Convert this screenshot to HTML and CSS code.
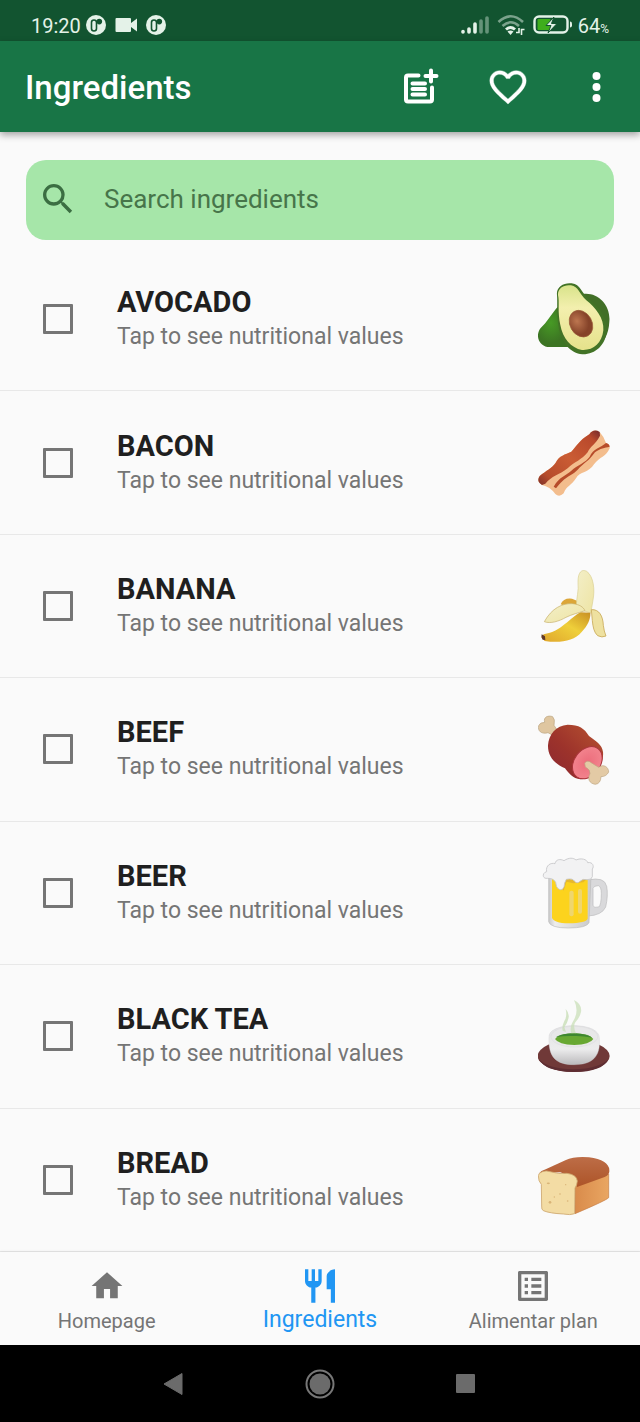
FILE: index.html
```html
<!DOCTYPE html>
<html lang="en">
<head>
<meta charset="utf-8">
<meta name="viewport" content="width=device-width, initial-scale=1">
<title>Ingredients</title>
<link rel="stylesheet" href="styles.css">
</head>
<body>
<div class="status">
  <div class="status-group">
    <span class="status-time">19:20</span>
    <svg class="status-dot" viewBox="0 0 20 20"><circle cx="10" cy="10" r="10" fill="#e4f2e8"/><rect x="5.500" y="5" width="5" height="11" rx="2.500" fill="none" stroke="#125430" stroke-width="1.600"/><circle cx="13.300" cy="6.600" r="2.800" fill="#125430"/></svg>
    <svg class="status-cam" viewBox="0 0 22 16"><path d="M1.500 1h13.500q1 0 1 1v4l6-4.500v13L16 10v4q0 1-1 1H1.500q-1 0-1-1V2q0-1 1-1z" fill="#e4f2e8"/></svg>
    <svg class="status-dot" viewBox="0 0 20 20"><circle cx="10" cy="10" r="10" fill="#e4f2e8"/><rect x="5.500" y="5" width="5" height="11" rx="2.500" fill="none" stroke="#125430" stroke-width="1.600"/><circle cx="13.300" cy="6.600" r="2.800" fill="#125430"/></svg>
  </div>
  <div class="status-group status-right">
    <svg class="status-signal" viewBox="0 0 28 18" fill="none" stroke="#e4f2e8" stroke-width="3.600" stroke-linecap="round"><path d="M2 16v-.5M8 16v-3M14 16V8"/><path d="M20 16V5M26 16V2" opacity=".4"/></svg>
    <svg class="status-wifi" viewBox="0 0 28 22" fill="none" stroke="#e4f2e8" stroke-width="2.600"><path d="M1.500 8Q13.500-3.500 26 8M5.500 12Q13.500 4.500 22 12" opacity=".5"/><path d="M9 15.500q4.500-4 9 0" stroke-width="3"/><path d="M10.500 17.500q3-2 6 0L13.500 21z" fill="#e4f2e8" stroke="none"/><path d="M19 18.500h3v-4.500M24.500 21v-5.500h3" stroke-width="1.600"/></svg>
    <svg class="status-battery" viewBox="0 0 40 20"><rect x="1.500" y="1.500" width="33" height="16" rx="4.500" fill="none" stroke="#e4f2e8" stroke-width="2.400"/><rect x="4.500" y="4" width="13" height="11" rx="1" fill="#3fae1c"/><path d="M37 6.500q2 0 2 2v2q0 2-2 2z" fill="#e4f2e8"/><path d="M21 2L13 10.500h5L15 18l9-9.500h-5.500z" fill="#e4f2e8" stroke="#125430" stroke-width="1"/></svg>
    <span class="status-level">64<span class="status-percent">%</span></span>
  </div>
</div>

<header class="appbar">
  <h1 class="appbar-title">Ingredients</h1>
  <button class="icon-button" aria-label="Add ingredient"><svg class="icon" viewBox="0 0 40 40" fill="none" stroke="#fff" stroke-width="4" stroke-linecap="round" stroke-linejoin="round"><path d="M18.500 8.500H8q-2 0-2 2v22q0 2 2 2h22q2 0 2-2V20.500M12.500 16.500h12.500M12.500 22h12.500M12.500 27.500h12.500M31 3.500v11M25.500 9h11" /></svg></button>
  <button class="icon-button" aria-label="Favorites"><svg class="icon" viewBox="1 1 22 22" fill="#fff"><path d="M16.500 3c-1.740 0-3.410.81-4.500 2.090C10.910 3.810 9.240 3 7.500 3 4.420 3 2 5.420 2 8.500c0 3.780 3.400 6.860 8.550 11.540L12 21.350l1.450-1.320C18.600 15.360 22 12.280 22 8.500 22 5.420 19.580 3 16.500 3zm-4.400 15.550l-.1.100-.1-.1C7.140 14.240 4 11.390 4 8.500 4 6.500 5.500 5 7.500 5c1.540 0 3.040.99 3.570 2.360h1.870C13.460 5.990 14.960 5 16.500 5c2 0 3.500 1.500 3.500 3.500 0 2.890-3.140 5.740-7.900 10.050z" stroke="#fff" stroke-width=".2"/></svg></button>
  <button class="icon-button" aria-label="More options"><svg class="icon" viewBox="0 0 40 40" fill="#fff"><circle cx="20.500" cy="9" r="4"/><circle cx="20.500" cy="20" r="4"/><circle cx="20.500" cy="31" r="4"/></svg></button>
</header>

<main class="content">
  <label class="search">
    <svg class="icon" viewBox="0 0 24 24" fill="#3b6e42"><path d="M15.500 14h-.79l-.28-.27A6.471 6.471 0 0 0 16 9.500 6.500 6.500 0 1 0 9.500 16c1.610 0 3.090-.59 4.230-1.570l.27.28v.79l5 4.990L20.490 19l-4.990-5zm-6 0C7.010 14 5 11.990 5 9.500S7.010 5 9.500 5 14 7.010 14 9.500 11.990 14 9.500 14z"/></svg>
    <input class="search-input" type="search" placeholder="Search ingredients" aria-label="Search ingredients">
  </label>

  <ul class="list">
    <li class="row">
      <input class="check" type="checkbox" id="avocado">
      <label class="row-text" for="avocado"><span class="row-name">AVOCADO</span><span class="row-hint">Tap to see nutritional values</span></label>
      <svg class="food" viewBox="54 39 216 216">
        <defs>
          <radialGradient id="av-skin" cx=".4" cy=".4"><stop offset="0" stop-color="#479a25"/><stop offset="1" stop-color="#3c7423"/></radialGradient>
          <linearGradient id="av-flesh" x1="0" y1="0" x2="0" y2="1"><stop offset="0" stop-color="#d8e38a"/><stop offset=".35" stop-color="#f3efae"/><stop offset="1" stop-color="#e5e28b"/></linearGradient>
          <radialGradient id="av-pit" cx=".4" cy=".35"><stop offset="0" stop-color="#bd7650"/><stop offset="1" stop-color="#854329"/></radialGradient>
        </defs>
        <path d="M112 112C95 132 80 158 62 174C45 196 56 225 82 231L150 231L150 110z" fill="url(#av-skin)"/>
        <path d="M188 72C233 65 273 105 268 155C266 195 250 218 232 232z" fill="#416f27"/>
        <path d="M111 75C108 50 132 37 155 40C183 44 182 66 205 86C235 108 265 142 260 184C256 226 226 254 187 253C151 250 123 216 116 171C109 128 113 98 111 75z" fill="#427326"/>
        <path d="M114 75C113 54 132 43 153 46C176 50 177 71 199 91C226 112 253 145 250 181C246 220 219 242 186 240C153 234 128 205 121 165C112 125 119 95 114 75z" fill="url(#av-flesh)"/>
        <ellipse cx="183" cy="161" rx="33" ry="42" transform="rotate(-30 183 161)" fill="url(#av-pit)" stroke="#9a5b38" stroke-width="2"/>
      </svg>
    </li>
    <li class="row">
      <input class="check" type="checkbox" id="bacon">
      <label class="row-text" for="bacon"><span class="row-name">BACON</span><span class="row-hint">Tap to see nutritional values</span></label>
      <svg class="food" viewBox="54 34 216 216">
        <defs><linearGradient id="ba-meat" x1="0" y1="1" x2="1" y2="0"><stop offset="0" stop-color="#7e3029"/><stop offset=".16" stop-color="#b64c2b"/><stop offset=".5" stop-color="#ca5c34"/><stop offset=".86" stop-color="#b9492c"/><stop offset="1" stop-color="#72292c"/></linearGradient></defs>
        <path d="M208 56Q220 38 239 49Q252 63 258 82Q271 88 269 98C257 125 240 122 222 146C207 172 179 167 168 188C153 211 141 209 131 233Q118 246 106 235Q90 213 66 208Q48 197 59 181C79 164 95 158 107 141C118 119 135 117 154 108C169 94 175 76 208 56z" fill="#f3bd8d"/>
        <path d="M208 56Q220 38 239 49L240 60C225 88 211 91 203 110C186 132 163 139 143 158C117 178 95 181 76 204L66 208Q48 197 59 181C79 164 95 158 107 141C118 119 135 117 154 108C169 94 175 76 208 56z" fill="url(#ba-meat)"/>
        <path d="M258 82Q268 84 269 93C254 97 241 97 225 110C208 135 192 142 173 162C156 181 137 179 108 218L101 213C118 182 137 181 154 165C172 148 197 141 209 123C219 98 243 96 258 82z" fill="#b74c2a"/>
      </svg>
    </li>
    <li class="row">
      <input class="check" type="checkbox" id="banana">
      <label class="row-text" for="banana"><span class="row-name">BANANA</span><span class="row-hint">Tap to see nutritional values</span></label>
      <svg class="food" viewBox="54 36 216 216">
        <defs>
          <linearGradient id="bn-peel" x1="1" y1="0" x2="0" y2="1"><stop offset="0" stop-color="#c88f22"/><stop offset=".45" stop-color="#efcf3a"/><stop offset="1" stop-color="#dfa52c"/></linearGradient>
          <linearGradient id="bn-inner" x1="0" y1="0" x2="1" y2="1"><stop offset="0" stop-color="#f3efc8"/><stop offset="1" stop-color="#eee4a4"/></linearGradient>
        </defs>
        <path d="M122 139Q130 119 156 122L180 132L194 155L145 148z" fill="#dca638"/>
        <path d="M174 71C174 43 185 32 200 40C221 55 225 96 219 126Q215 151 212 165Q192 162 169 145C169 119 177 100 174 71z" fill="url(#bn-inner)" stroke="#d9cf91" stroke-width="2"/>
        <path d="M182 163C150 178 125 221 71 229L64 238L74 249C121 256 162 249 185 222C205 201 212 182 211 164z" fill="url(#bn-peel)"/>
        <path d="M65 229L75 235L76 246L68 245Q62 237 65 229z" fill="#5f3928"/>
        <path d="M73 191C95 151 127 135 158 137C178 139 190 147 195 158C174 165 156 169 138 178C117 190 91 198 73 191z" fill="url(#bn-inner)" stroke="#c6ae66" stroke-width="2"/>
        <path d="M214 155C237 153 249 174 250 202Q252 220 258 234Q246 240 233 233C222 223 219 208 217 188z" fill="#eee1a0" stroke="#c9aa58" stroke-width="2.500"/>
      </svg>
    </li>
    <li class="row">
      <input class="check" type="checkbox" id="beef">
      <label class="row-text" for="beef"><span class="row-name">BEEF</span><span class="row-hint">Tap to see nutritional values</span></label>
      <svg class="food" viewBox="54 40 216 216">
        <defs>
          <linearGradient id="be-meat" x1="1" y1="0" x2="0" y2="1"><stop offset="0" stop-color="#b85431"/><stop offset=".55" stop-color="#9d332b"/><stop offset="1" stop-color="#8a2731"/></linearGradient>
          <radialGradient id="be-cut"><stop offset="0" stop-color="#ec6c7b"/><stop offset="1" stop-color="#f2838d"/></radialGradient>
        </defs>
        <path d="M95 105L84 99C64 105 52 93 56 78Q60 68 74 68C69 52 85 46 98 51Q106 58 102 77L112 92z" fill="#dfc6a0" stroke="#baa582" stroke-width="2"/>
        <path d="M84 137C86 105 108 77 143 75C178 75 193 86 207 109C226 123 247 135 249 157C253 197 219 238 181 239C159 238 145 219 135 206C104 192 83 171 84 137z" fill="url(#be-meat)"/>
        <ellipse cx="202" cy="189" rx="39" ry="53" transform="rotate(37 202 189)" fill="url(#be-cut)" stroke="#aa343b" stroke-width="3"/>
        <path d="M194 190Q203 179 215 190L236 203C251 191 266 203 266 217Q259 231 243 231Q242 252 226 254C207 251 202 237 210 222Q212 210 196 202z" fill="#e3caa5" stroke="#bca481" stroke-width="2"/>
      </svg>
    </li>
    <li class="row">
      <input class="check" type="checkbox" id="beer">
      <label class="row-text" for="beer"><span class="row-name">BEER</span><span class="row-hint">Tap to see nutritional values</span></label>
      <svg class="food" viewBox="54 36 216 216">
        <defs><linearGradient id="br-glass"><stop offset="0" stop-color="#c7c7c7"/><stop offset=".15" stop-color="#ededed"/><stop offset="1" stop-color="#cacaca"/></linearGradient></defs>
        <path d="M204 105Q254 94 260 124Q265 151 257 186Q246 211 203 213z" fill="#d9d9db" stroke="#b9b9bb" stroke-width="2"/>
        <path d="M219 130Q221 122 235 122Q244 125 244 145Q244 181 236 186Q222 190 219 182z" fill="#fafafa" stroke="#b9b9bb" stroke-width="2"/>
        <path d="M86 92H213L207 233Q200 249 145 249Q91 249 86 230z" fill="url(#br-glass)" stroke="#bcbcbd" stroke-width="2"/>
        <path d="M96 101H203V221Q198 234 146 235Q101 234 96 218z" fill="#fcd31d"/>
        <rect x="148" y="137" width="13" height="77" rx="6" fill="#efd66d"/><rect x="174" y="132" width="12" height="74" rx="6" fill="#efd66d"/>
        <path d="M107 108L131 137Q137 116 140 110L160 115L190 112L200 103V90H97z" fill="#e6b82c"/>
        <path d="M82 100C66 102 66 83 80 80C76 61 93 52 105 56C107 43 121 41 132 47C147 37 160 38 168 45C184 38 201 43 203 53C219 50 223 65 217 72V95Q215 105 201 104Q188 100 180 109Q171 118 163 108Q158 99 139 103Q133 113 132 125Q128 137 117 133Q108 128 107 112Q100 99 82 100z" fill="#f2f2f3" stroke="#c5c5c8" stroke-width="2.500"/>
      </svg>
    </li>
    <li class="row">
      <input class="check" type="checkbox" id="black-tea">
      <label class="row-text" for="black-tea"><span class="row-name">BLACK TEA</span><span class="row-hint">Tap to see nutritional values</span></label>
      <svg class="food" viewBox="54 30 216 216">
        <defs><linearGradient id="te-cup" x1="0" y1="0" x2="0" y2="1"><stop offset="0" stop-color="#e3e3e4"/><stop offset=".6" stop-color="#ececed"/><stop offset="1" stop-color="#bbbabc"/></linearGradient></defs>
        <ellipse cx="161" cy="198" rx="108" ry="48" fill="#703938"/><path d="M57 207Q81 236 160 238Q241 235 266 206Q250 245 161 246Q73 244 57 207z" fill="#5e2d32"/>
        <path d="M87 140C87 96 238 94 238 144C243 203 214 224 162 224C108 224 84 202 87 140z" fill="url(#te-cup)" stroke="#cfcfd1" stroke-width="1"/>
        <ellipse cx="163" cy="140" rx="70" ry="31" fill="#e8e8e9" stroke="#d6d6d7" stroke-width="1"/>
        <path d="M105 147Q117 131 163 130Q208 131 220 147Q210 164 163 165Q115 164 105 147z" fill="#68a832"/>
        <path d="M107 142Q126 130 163 130Q199 131 217 143Q188 137 162 138Q129 137 107 142z" fill="#3e8730"/>
        <path d="M137 57Q150 71 145 86Q142 99 133 112L138 126L128 122Q125 109 133 93Q142 80 137 57z" fill="#c9dfb8" opacity=".8"/>
        <path d="M162 30Q187 43 183 66Q179 84 165 98Q159 111 168 130H154Q148 112 158 96Q179 65 162 30z" fill="#c9dfb8" opacity=".75"/>
      </svg>
    </li>
    <li class="row">
      <input class="check" type="checkbox" id="bread">
      <label class="row-text" for="bread"><span class="row-name">BREAD</span><span class="row-hint">Tap to see nutritional values</span></label>
      <svg class="food" viewBox="54 10 216 216">
        <defs>
          <linearGradient id="bd-top" x1=".6" y1="0" x2=".6" y2="1"><stop offset="0" stop-color="#bd6d47"/><stop offset="1" stop-color="#ad5428"/></linearGradient>
          <linearGradient id="bd-side"><stop offset="0" stop-color="#d98b4b"/><stop offset="1" stop-color="#e9a662"/></linearGradient>
        </defs>
        <path d="M165 130L266 100V171Q259 179 165 219z" fill="url(#bd-side)" stroke="#c57b44" stroke-width="2"/>
        <path d="M58 98Q62 91 77 86L136 59Q164 46 207 50Q266 58 268 88Q270 102 254 109L171 139L163 111L121 95z" fill="url(#bd-top)"/>
        <path d="M67 93Q77 88 95 94Q115 101 141 98Q170 102 172 121Q171 134 165 142L164 219Q151 224 130 220Q89 218 70 210Q64 207 65 196L64 131Q55 122 55 105Q56 96 67 93z" fill="#f3dca4" stroke="#cda66d" stroke-width="2.500"/>
        <g fill="#d9b477"><ellipse cx="85" cy="128" rx="5" ry="2.500"/><circle cx="90" cy="185" r="4"/><circle cx="120" cy="160" r="2.500"/><circle cx="143" cy="181" r="2.500"/><circle cx="103" cy="169" r="2"/><circle cx="137" cy="132" r="2"/></g>
      </svg>
    </li>
  </ul>
</main>

<nav class="tabs" aria-label="Main">
  <a class="tab" href="#home"><svg class="icon" viewBox="-1 -1 26 26" fill="currentColor"><path d="M10 20v-6h4v6h5v-8h3L12 3 2 12h3v8z"/></svg><span>Homepage</span></a>
  <a class="tab tab-active" href="#ingredients" aria-current="page"><svg class="icon" viewBox="0 0 24 24" fill="currentColor"><path d="M11 9H9V2H7v7H5V2H3v7c0 2.120 1.660 3.840 3.750 3.970V22h2.500v-9.030C11.340 12.840 13 11.120 13 9V2h-2v7zm5-3v8h2.500v8H21V2c-2.760 0-5 2.240-5 4z"/></svg><span>Ingredients</span></a>
  <a class="tab" href="#plan"><svg class="icon" viewBox="0 0 24 24" fill="currentColor"><path d="M19 5v14H5V5h14m1.100-2H3.900c-.5 0-.9.400-.9.900v16.200c0 .4.400.9.900.9h16.200c.4 0 .9-.5.900-.9V3.900c0-.5-.5-.9-.9-.9zM11 7h6v2h-6V7zm0 4h6v2h-6v-2zm0 4h6v2h-6zM7 7h2v2H7zm0 4h2v2H7zm0 4h2v2H7z"/></svg><span>Alimentar plan</span></a>
</nav>

<div class="system">
  <button class="system-button" aria-label="Back"><svg class="icon" viewBox="0 0 40 40"><path d="M10 20L28 9.500v21z" fill="#6b6b6b" stroke="#6b6b6b" stroke-linejoin="round"/></svg></button>
  <button class="system-button" aria-label="Home"><svg class="icon" viewBox="0 0 40 40"><circle cx="20" cy="20" r="13.500" fill="none" stroke="#777" stroke-width="2"/><circle cx="20" cy="20" r="10.500" fill="#6b6b6b"/></svg></button>
  <button class="system-button" aria-label="Recent apps"><svg class="icon" viewBox="0 0 40 40"><rect x="10" y="10" width="19" height="19" rx="1" fill="#6b6b6b"/></svg></button>
</div>
</body>
</html>
```

FILE: styles.css
```css
* {
  box-sizing: border-box;
}

body {
  margin: 0;
  min-height: 100vh;
  display: flex;
  flex-direction: column;
  background: #fafafa;
  color: #1f1f1f;
  font-family: Roboto, "Noto Sans", sans-serif;
}

svg {
  display: block;
  flex: none;
}

button {
  padding: 0;
  border: 0;
  background: none;
  display: flex;
  align-items: center;
  justify-content: center;
}

.icon {
  width: 40px;
  height: 40px;
}

/* Status bar */
.status {
  display: flex;
  justify-content: space-between;
  padding: 10px 31px 0;
  height: 41px;
  background: #125430;
  color: #e4f2e8;
  font-size: 20px;
}

.status-group {
  display: flex;
  align-items: center;
  height: 30px;
  gap: 8px;
}

.status-time,
.status-level {
  padding-top: 2px;
}

.status-time {
  margin-right: -3px;
}

.status-dot {
  width: 20px;
  height: 20px;
}

.status-cam {
  width: 24px;
  height: 16px;
}

.status-signal {
  width: 28px;
  height: 18px;
}

.status-wifi {
  width: 28px;
  height: 22px;
}

.status-battery {
  width: 40px;
  height: 20px;
}

.status-level {
  margin-left: -3px;
}

.status-percent {
  font-size: 12px;
}

/* App bar */
.appbar {
  display: flex;
  align-items: center;
  gap: 48px;
  height: 91px;
  padding: 0 24px 0 25px;
  background: #187546;
  color: #fff;
  box-shadow: 0 3px 7px rgba(0, 0, 0, 0.35);
}

.appbar-title {
  flex: 1;
  margin: 0;
  padding-top: 2px;
  font-size: 33px;
  font-weight: 500;
}

/* Search and list */
.content {
  flex: 1;
  display: flex;
  flex-direction: column;
}

.search {
  display: flex;
  align-items: center;
  gap: 26px;
  height: 80px;
  margin: 28px 26px 8px;
  padding: 0 12px 2px;
  border-radius: 20px;
  background: #a6e6a9;
}

.search-input {
  flex: 1;
  min-width: 0;
  padding: 0;
  border: 0;
  outline: 0;
  background: none;
  color: #356b3c;
  font: 26px/32px Roboto, "Noto Sans", sans-serif;
}

.search-input::placeholder {
  color: #47754a;
  opacity: 1;
}

.list {
  flex: 1;
  display: flex;
  flex-direction: column;
  margin: 0;
  padding: 0;
  list-style: none;
}

.row {
  flex: 1;
  display: flex;
  align-items: center;
  min-height: 120px;
  padding: 0 30px 0 43px;
  border-bottom: 1px solid #e8e8e8;
}

.check {
  appearance: none;
  width: 30px;
  height: 30px;
  margin: 0 44px 0 0;
  border: 3px solid #757575;
  border-radius: 1px;
}

.check:checked {
  background: #757575;
}

.row-text {
  flex: 1;
  display: flex;
  flex-direction: column;
}

.row-name {
  font-size: 29px;
  line-height: 36px;
  font-weight: 700;
}

.row-hint {
  color: #757575;
  font-size: 23px;
  line-height: 34px;
}

.food {
  width: 72px;
  height: 72px;
}

/* Bottom tabs */
.tabs {
  display: flex;
  height: 93px;
  box-shadow: 0 -1px 2px rgba(0, 0, 0, 0.06);
}

.tab {
  flex: 1;
  display: flex;
  flex-direction: column;
  align-items: center;
  padding-top: 14px;
  color: #757575;
  font-size: 20px;
  line-height: 30px;
  text-decoration: none;
}

.tab-active {
  color: #2196f3;
  font-size: 23px;
  line-height: 28px;
}

/* System navigation */
.system {
  display: flex;
  justify-content: center;
  height: 77px;
  background: #000;
}

.system-button {
  width: 146px;
}
```
